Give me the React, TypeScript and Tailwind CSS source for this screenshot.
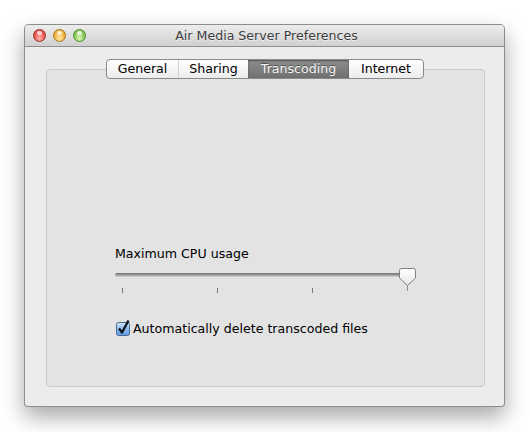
import React from "react"

const tabs = [
  { label: "General", w: "w-[71px]" },
  { label: "Sharing", w: "w-[70px]" },
  { label: "Transcoding", w: "w-[101px]", active: true },
  { label: "Internet", w: "w-[74px]" },
]

function Light({ from, to, ring }: { from: string; to: string; ring: string }) {
  return (
    <div className={`w-[13px] h-[13px] rounded-full border ${ring} bg-radial-[at_50%_75%] ${from} ${to} relative`}>
      <div className="absolute left-[3px] top-[1px] w-[5px] h-[4px] rounded-full bg-white/70" />
    </div>
  )
}

function Thumb() {
  return (
    <svg width="17" height="23" viewBox="0 0 17 23">
      <defs>
        <linearGradient id="tg" x1="0" y1="0" x2="0" y2="1">
          <stop offset="0" stopColor="#ffffff" />
          <stop offset="1" stopColor="#e6e6e6" />
        </linearGradient>
      </defs>
      <path d="M2.5 0.5 H14.5 A2 2 0 0 1 16.5 2.5 V10 L8.5 17.5 L0.5 10 V2.5 A2 2 0 0 1 2.5 0.5 Z" fill="url(#tg)" stroke="#7d7d7d" />
      <line x1="8.5" y1="17.5" x2="8.5" y2="23" stroke="#8a8a8a" />
    </svg>
  )
}

function Check() {
  return (
    <svg width="16" height="17" viewBox="0 0 16 17">
      <defs>
        <linearGradient id="cg" x1="0" y1="0" x2="0" y2="1">
          <stop offset="0" stopColor="#d3e6fb" />
          <stop offset="0.5" stopColor="#8dbbf0" />
          <stop offset="1" stopColor="#5f9be2" />
        </linearGradient>
      </defs>
      <rect x="1.5" y="3.5" width="13" height="13" rx="2" fill="url(#cg)" stroke="#4a6a92" />
      <path d="M4 9.5 L7 13.5 L13.5 1.5" fill="none" stroke="#101820" strokeWidth="2.4" strokeLinejoin="round" />
    </svg>
  )
}

export default function App() {
  return (
    <div className="w-[530px] h-[432px] bg-white font-['DejaVu_Sans',sans-serif] text-[12.6px] leading-4 text-black">
      <div className="pt-[24px] pl-[24px]">
        <div className="w-[481px] h-[383px] flex flex-col rounded-t-[5px] rounded-b-[4px] border border-black/40 bg-[#ececec] shadow-[0_10px_22px_rgba(0,0,0,0.35)] overflow-hidden">
          {/* title bar */}
          <div className="h-[22px] flex items-center px-[8px] bg-linear-to-b from-[#ededed] to-[#d0d0d0] border-b border-[#8f8f8f]">
            <div className="flex items-center gap-[7px]">
              <Light from="from-[#ffb3a8]" to="to-[#d9281c]" ring="border-[#9a2a22]" />
              <Light from="from-[#ffe6a0]" to="to-[#e39c12]" ring="border-[#a77312]" />
              <Light from="from-[#d9f7b0]" to="to-[#5cae2c]" ring="border-[#4a8a2a]" />
            </div>
            <div className="flex-1 text-center text-[#3d3d3d] [text-shadow:0_1px_0_rgba(255,255,255,0.6)] pr-[49px]">
              Air Media Server Preferences
            </div>
          </div>

          {/* body */}
          <div className="flex flex-col pl-[21px] pt-[12px]">
            <div className="flex relative z-10 ml-[60px] h-[20px] rounded-[4px] border border-[#8a8a8a] bg-linear-to-b from-white to-[#ececec] w-fit overflow-hidden">
              {tabs.map((t, i) => (
                <div
                  key={t.label}
                  className={`${t.w} flex items-center justify-center ${
                    t.active
                      ? "bg-linear-to-b from-[#8e8e8e] to-[#707070] text-[#f4f4f4] [text-shadow:0_-1px_0_rgba(0,0,0,0.4)] shadow-[inset_0_1px_2px_rgba(0,0,0,0.4)]"
                      : "text-black"
                  } ${i === 1 ? "border-l border-[#d0d0d0]" : ""}`}
                >
                  {t.label}
                </div>
              ))}
            </div>

            <div className="-mt-[10px] w-[439px] h-[318px] rounded-[4px] border border-[#cbcbcb] bg-[#e3e3e3] pl-[68px] pt-[176px]">
              <div>Maximum CPU usage</div>
              <div className="relative w-[300px] h-[28px] mt-[4px]">
                <div className="absolute left-0 top-[7px] w-[298px] h-[4px] rounded-full bg-linear-to-b from-[#6f6f6f] to-[#b5b5b5] border-b border-white/60" />
                <div className="absolute left-[7px] top-[22px] w-px h-[5px] bg-[#7a7a7a]" />
                <div className="absolute left-[102px] top-[22px] w-px h-[5px] bg-[#7a7a7a]" />
                <div className="absolute left-[197px] top-[22px] w-px h-[5px] bg-[#7a7a7a]" />
                <div className="absolute left-[284px] top-[2px]">
                  <Thumb />
                </div>
              </div>
              <div className="flex items-center gap-[2px] mt-[27px]">
                <div className="-mt-[3px]">
                  <Check />
                </div>
                <span>Automatically delete transcoded files</span>
              </div>
            </div>
          </div>
        </div>
      </div>
    </div>
  )
}
